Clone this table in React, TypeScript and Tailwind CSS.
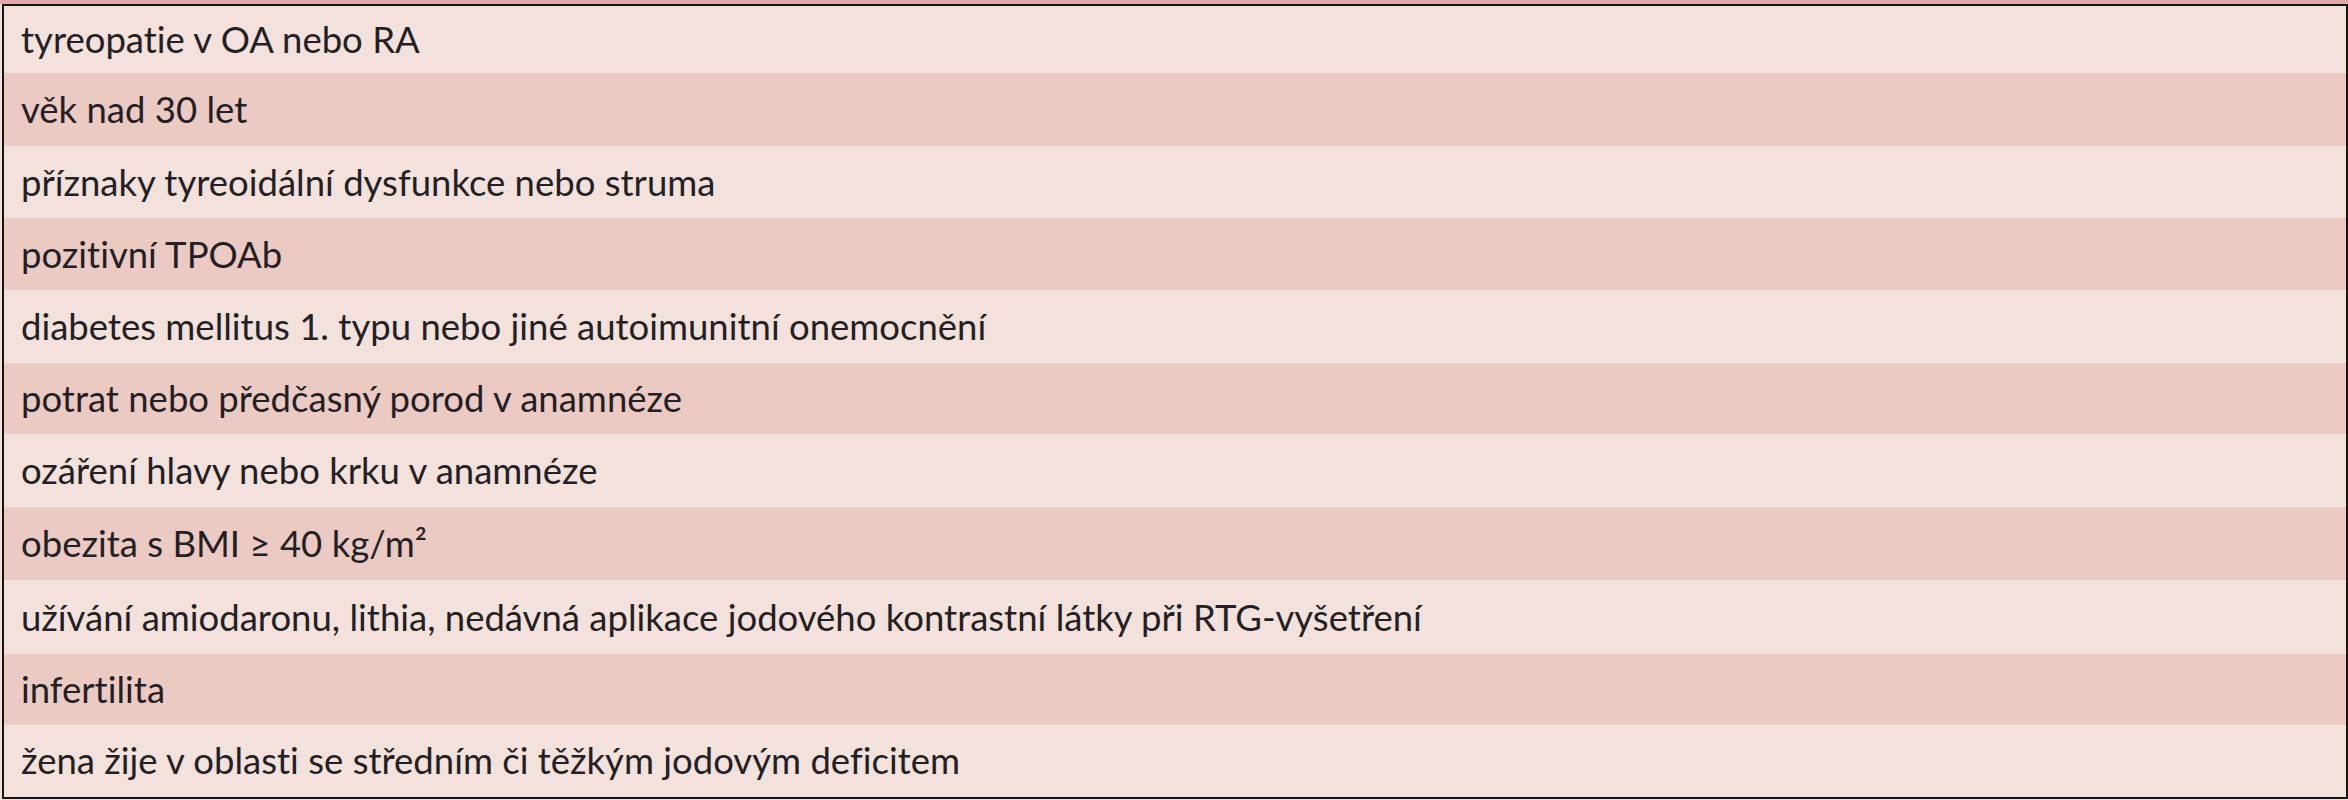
import React from "react";

const rows: { text: string; cls: string }[] = [
  { text: "tyreopatie v OA nebo RA", cls: "h-[67px] bg-[#f3e1dc]" },
  { text: "věk nad 30 let", cls: "h-[73px] bg-[#eccac4]" },
  { text: "příznaky tyreoidální dysfunkce nebo struma", cls: "h-[72px] bg-[#f3e1dc]" },
  { text: "pozitivní TPOAb", cls: "h-[72px] bg-[#eccac4]" },
  { text: "diabetes mellitus 1. typu nebo jiné autoimunitní onemocnění", cls: "h-[73px] bg-[#f3e1dc]" },
  { text: "potrat nebo předčasný porod v anamnéze", cls: "h-[71px] bg-[#eccac4]" },
  { text: "ozáření hlavy nebo krku v anamnéze", cls: "h-[73px] bg-[#f3e1dc]" },
  { text: "obezita s BMI ≥ 40 kg/m²", cls: "h-[73px] bg-[#eccac4]" },
  { text: "užívání amiodaronu, lithia, nedávná aplikace jodového kontrastní látky při RTG-vyšetření", cls: "h-[74px] bg-[#f3e1dc]" },
  { text: "infertilita", cls: "h-[71px] bg-[#eccac4]" },
  { text: "žena žije v oblasti se středním či těžkým jodovým deficitem", cls: "h-[71px] bg-[#f3e1dc]" },
];

export default function App() {
  return (
    <div className="w-[2348px] h-[800px] bg-[#f3e1dc] flex flex-col overflow-hidden">
      <div className="h-[4px] w-full bg-[#e2aaa6] shrink-0" />
      <div className="ml-[2px] w-[2346px] h-[795px] border-2 border-[#151515] flex flex-col shrink-0">
        {rows.map((r, i) => (
          <div
            key={i}
            className={`${r.cls} flex items-center pl-[17px] text-[36.5px] text-[#231f24] font-['Lato',sans-serif] [font-variant-ligatures:none] shrink-0`}
          >
            {r.text}
          </div>
        ))}
      </div>
    </div>
  );
}
